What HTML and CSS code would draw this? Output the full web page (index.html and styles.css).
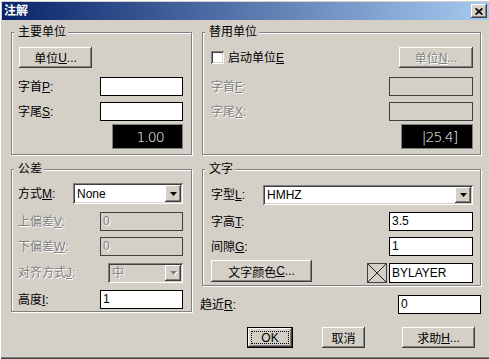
FILE: index.html
```html
<!DOCTYPE html>
<html lang="zh-CN">
<head>
  <meta charset="UTF-8">
  <title>注解</title>
  <link rel="stylesheet" href="styles.css">
</head>
<body>
  <div class="window">
    <div class="titlebar">
      <span class="title">注解</span>
      <span class="close">
        <svg width="8" height="7" viewBox="0 0 8 7"><path d="M0.6 0.4L7.4 6.6M7.4 0.4L0.6 6.6" stroke="#000" stroke-width="1.7"/></svg>
      </span>
    </div>

    <div class="main">
      <div class="section">
        <div class="group group-left h123">
          <div class="group-title">主要单位</div>
          <div class="row mt8"><button class="btn w73 ml1">单位<u>U</u>...</button></div>
          <div class="row mt9"><label>字首<u>P</u>:</label><span class="edit w83"></span></div>
          <div class="row mt6"><label>字尾<u>S</u>:</label><span class="edit w83"></span></div>
          <div class="row end mt3"><span class="readout w71">1.00</span></div>
        </div>

        <div class="group group-right h123">
          <div class="group-title">替用单位</div>
          <div class="row mt8">
            <label class="check-label"><span class="check"></span><span>启动单位<u>E</u></span></label>
            <button class="btn w74 disabled">单位<u>N</u>...</button>
          </div>
          <div class="row mt9"><label class="disabled">字首<u>F</u>:</label><span class="edit w84 off"></span></div>
          <div class="row mt6"><label class="disabled">字尾<u>X</u>:</label><span class="edit w84 off"></span></div>
          <div class="row end mt3"><span class="readout w72">|25.4]</span></div>
        </div>
      </div>

      <div class="section mt14">
        <div class="group group-left h143">
          <div class="group-title">公差</div>
          <div class="row mt7">
            <label>方式<u>M</u>:</label>
            <div class="combo w110"><span class="combo-text">None</span><span class="combo-btn"><svg width="7" height="4"><path d="M0 0h7L3.5 4z"/></svg></span></div>
          </div>
          <div class="row mt8"><label class="disabled">上偏差<u>V</u>:</label><span class="edit w83 off">0</span></div>
          <div class="row mt6"><label class="disabled">下偏差<u>W</u>:</label><span class="edit w83 off">0</span></div>
          <div class="row mt7">
            <label class="disabled">对齐方式<u>J</u>:</label>
            <div class="combo h20 w75 off"><span class="combo-text">中</span><span class="combo-btn"><svg width="7" height="4"><path d="M0 0h7L3.5 4z"/></svg></span></div>
          </div>
          <div class="row mt7"><label>高度<u>I</u>:</label><span class="edit w83">1</span></div>
        </div>

        <div class="column">
          <div class="group group-right h117">
            <div class="group-title">文字</div>
            <div class="row mt9">
              <label>字型<u>L</u>:</label>
              <div class="combo h20 w210"><span class="combo-text">HMHZ</span><span class="combo-btn"><svg width="7" height="4"><path d="M0 0h7L3.5 4z"/></svg></span></div>
            </div>
            <div class="row mt7"><label>字高<u>T</u>:</label><span class="edit w84">3.5</span></div>
            <div class="row mt6"><label>间隙<u>G</u>:</label><span class="edit w84">1</span></div>
            <div class="row bottom mt4">
              <button class="btn w101 h22 mb1">文字颜色<u>C</u>...</button>
              <div class="color-pick">
                <svg class="swatch" width="20" height="20" viewBox="0 0 20 20">
                  <rect x="0.5" y="0.5" width="19" height="19" fill="#d4d0c8" stroke="#404040"/>
                  <path d="M1 1L19 19M19 1L1 19" stroke="#202020" stroke-width="1"/>
                </svg>
                <span class="edit w84 h20">BYLAYER</span>
              </div>
            </div>
          </div>
          <div class="row round-row mt9"><label>趋近<u>R</u>:</label><span class="edit w83">0</span></div>
        </div>
      </div>

      <div class="actions">
        <button class="btn btn-default w46"><span class="focus">OK</span></button>
        <button class="btn w43 ml29">取消</button>
        <button class="btn w73 ml37">求助<u>H</u>...</button>
      </div>
    </div>
  </div>
</body>
</html>
```

FILE: styles.css
```css
body {
  margin: 0;
  background: #d4d0c8;
  font-family: "Liberation Sans", "Noto Sans CJK SC", sans-serif;
  font-size: 12px;
  color: #000;
}

.window {
  width: 489px;
  height: 359px;
  box-sizing: border-box;
  padding: 2px 0 0 2px;
  background: #d4d0c8;
  box-shadow: inset 1px 1px #fff, inset 0 -1px #404040, inset 0 -2px #808080;
}

.titlebar {
  height: 18px;
  display: flex;
  align-items: center;
  justify-content: space-between;
  padding: 0 2px;
  background: linear-gradient(to right, #0a246a, #a6caf0);
}

.title {
  color: #fff;
  font-weight: bold;
  line-height: 14px;
}

.close {
  width: 16px;
  height: 14px;
  display: flex;
  align-items: center;
  justify-content: center;
  background: #d4d0c8;
  box-shadow: inset -1px -1px #404040, inset 1px 1px #fff, inset -2px -2px #808080;
}

.main {
  padding: 12px 8px 0 9px;
}

.section {
  display: grid;
  grid-template-columns: 181px 279px;
  column-gap: 10px;
  align-items: start;
}

.column {
  display: flex;
  flex-direction: column;
}

/* group boxes */
.group {
  box-sizing: border-box;
  display: flex;
  flex-direction: column;
  border: 1px solid #808080;
  box-shadow: inset 1px 1px #fff, 1px 1px #fff;
}

.group-left {
  padding: 0 8px 0 6px;
}

.group-right {
  padding: 0 7px 0 8px;
}

.group-title {
  align-self: flex-start;
  height: 14px;
  line-height: 14px;
  margin-top: -8px;
  padding: 0 2px 0 4px;
  background: #d4d0c8;
}

.group-left .group-title {
  margin-left: -4px;
}

.group-right .group-title {
  margin-left: -6px;
}

.h117 { height: 117px; }
.h123 { height: 123px; }
.h143 { height: 143px; }

.row {
  display: flex;
  align-items: center;
  justify-content: space-between;
}

.row.end {
  justify-content: flex-end;
}

.row.bottom {
  align-items: flex-end;
}

.round-row {
  margin-left: -2px;
}

label {
  line-height: 14px;
  white-space: nowrap;
}

u {
  text-decoration: underline;
  text-underline-offset: 1px;
}

.disabled {
  color: #808080;
  text-shadow: 1px 1px #fff;
}

.mt3 { margin-top: 3px; }
.mt4 { margin-top: 4px; }
.mt6 { margin-top: 6px; }
.mt7 { margin-top: 7px; }
.mt8 { margin-top: 8px; }
.mt9 { margin-top: 9px; }
.mt14 { margin-top: 14px; }
.mb1 { margin-bottom: 1px; }
.ml1 { margin-left: 1px; }
.ml29 { margin-left: 29px; }
.ml37 { margin-left: 37px; }

.w43 { width: 43px; }
.w46 { width: 46px; }
.w71 { width: 71px; }
.w72 { width: 72px; }
.w73 { width: 73px; }
.w74 { width: 74px; }
.w75 { width: 75px; }
.w83 { width: 83px; }
.w84 { width: 84px; }
.w101 { width: 101px; }
.w110 { width: 110px; }
.w210 { width: 210px; }

/* controls */
.edit {
  box-sizing: border-box;
  height: 19px;
  padding: 0 2px;
  border: 1px solid #000;
  background: #fff;
  line-height: 17px;
}

.edit.h20 {
  height: 20px;
  line-height: 18px;
}

.edit.off {
  background: #d4d0c8;
  border-color: #404040;
  color: #808080;
  text-shadow: 1px 1px #fff;
}

.readout {
  box-sizing: border-box;
  height: 25px;
  display: flex;
  align-items: center;
  justify-content: center;
  padding-left: 5px;
  background: #000;
  border: 1px solid #808080;
  color: #fff;
  font-family: "DejaVu Sans", sans-serif;
  font-size: 14px;
  font-weight: 200;
  letter-spacing: -1px;
}

.combo {
  box-sizing: border-box;
  height: 21px;
  display: flex;
  align-items: center;
  padding: 2px;
  background: #fff;
  box-shadow: inset 1px 1px #808080, inset -1px -1px #fff, inset 2px 2px #404040, inset -2px -2px #d4d0c8;
}

.combo.h20 {
  height: 20px;
}

.combo-text {
  flex: 1;
  padding-left: 2px;
  line-height: 14px;
}

.combo-btn {
  width: 16px;
  align-self: stretch;
  display: flex;
  align-items: center;
  justify-content: center;
  background: #d4d0c8;
  box-shadow: inset -1px -1px #404040, inset 1px 1px #fff, inset -2px -2px #808080;
}

.combo.off {
  background: #d4d0c8;
  color: #808080;
  text-shadow: 1px 1px #fff;
}

.combo.off .combo-btn svg {
  fill: #808080;
  filter: drop-shadow(1px 1px 0 #fff);
}

.check-label {
  display: flex;
  align-items: center;
  gap: 4px;
}

.check {
  width: 13px;
  height: 13px;
  box-sizing: border-box;
  background: #fff;
  box-shadow: inset 1px 1px #808080, inset -1px -1px #fff, inset 2px 2px #404040, inset -2px -2px #d4d0c8;
}

.color-pick {
  display: flex;
  align-items: center;
  gap: 2px;
}

.swatch {
  display: block;
}

.btn {
  box-sizing: border-box;
  height: 21px;
  display: flex;
  align-items: center;
  justify-content: center;
  padding: 0;
  border: 0;
  background: #d4d0c8;
  box-shadow: inset -1px -1px #404040, inset 1px 1px #fff, inset -2px -2px #808080;
  font: inherit;
  color: #000;
  white-space: nowrap;
}

.btn.h22 {
  height: 22px;
}

.btn.disabled {
  color: #808080;
  text-shadow: 1px 1px #fff;
}

.btn-default {
  border: 1px solid #000;
  box-shadow: inset -1px -1px #404040, inset 1px 1px #fff, inset -2px -2px #808080;
}

.focus {
  flex: 1;
  align-self: stretch;
  margin: 3px;
  display: flex;
  align-items: center;
  justify-content: center;
  border: 1px dotted #000;
}

.actions {
  display: flex;
  margin-top: 13px;
  padding-left: 236px;
}
```
